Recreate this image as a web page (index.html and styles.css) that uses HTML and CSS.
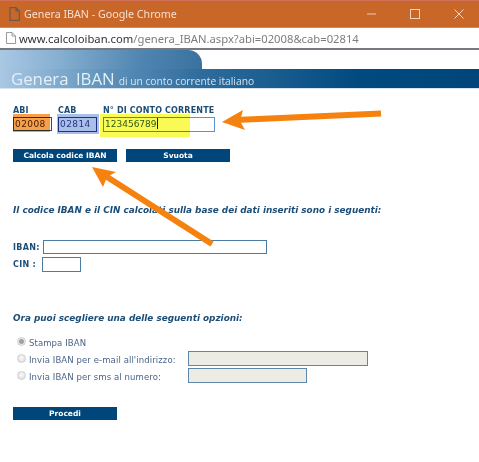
FILE: index.html
```html
<!DOCTYPE html>
<html lang="it">
<head>
<meta charset="utf-8">
<title>Genera IBAN</title>
<link rel="stylesheet" href="styles.css">
</head>
<body>
<header class="titlebar">
  <svg class="page-icon" width="11" height="14" viewBox="0 0 11 14"><path d="M1 .7h6l3.3 3.3v9.3H1z M7 .7V4h3.300" fill="none" stroke="#6b5a50" stroke-width="1.2"/></svg>
  <span class="title">Genera IBAN - Google Chrome</span>
  <div class="win-controls">
    <svg width="10" height="10" viewBox="0 0 10 10"><path d="M1 5h9" stroke="#f0c9ae" stroke-width="1"/></svg>
    <svg width="10" height="10" viewBox="0 0 10 10"><rect x=".5" y=".5" width="9" height="9" fill="none" stroke="#f0d3bf" stroke-width="1"/></svg>
    <svg width="10" height="10" viewBox="0 0 10 10"><path d="M.5.5l9 9M9.500.5l-9 9" stroke="#f6dccb" stroke-width="1"/></svg>
  </div>
</header>
<div class="urlbar">
  <svg class="url-icon" width="10" height="12" viewBox="0 0 10 12"><path d="M.5.5h5.500l3.500 3.500v7.500h-9z M6 .5V4h3.500" fill="#fff" stroke="#9a9a9a" stroke-width="1"/></svg>
  <span class="url"><span class="host">www.calcoloiban.com</span>/genera_IBAN.aspx?abi=02008&amp;cab=02814</span>
</div>
<div class="banner">
  <div class="banner-tab"></div>
  <div class="banner-strip">
    <span class="banner-title">Genera IBAN</span>
    <span class="banner-sub">di un conto corrente italiano</span>
  </div>
</div>
<main class="content">
  <div class="fields">
    <label class="field">
      <span class="field-label">ABI</span>
      <span class="box box-abi">02008</span>
    </label>
    <label class="field">
      <span class="field-label">CAB</span>
      <span class="box box-cab">02814</span>
    </label>
    <label class="field">
      <span class="field-label">N° DI CONTO CORRENTE</span>
      <span class="box box-conto">123456789<i class="caret"></i></span>
    </label>
    <div class="mark mark-abi"></div>
    <div class="mark mark-cab"></div>
    <div class="mark mark-conto"></div>
  </div>
  <div class="actions">
    <span class="btn">Calcola codice IBAN</span>
    <span class="btn">Svuota</span>
  </div>
  <h2 class="heading heading-first">Il codice IBAN e il CIN calcolati sulla base dei dati inseriti sono i seguenti:</h2>
  <div class="result-row row-iban">
    <span class="result-label">IBAN:</span>
    <span class="box result-iban"></span>
  </div>
  <div class="result-row row-cin">
    <span class="result-label">CIN :</span>
    <span class="box result-cin"></span>
  </div>
  <h2 class="heading heading-second">Ora puoi scegliere una delle seguenti opzioni:</h2>
  <div class="options">
    <span class="radio radio-on"></span><span class="option-text">Stampa IBAN</span><span></span>
    <span class="radio"></span><span class="option-text">Invia IBAN per e-mail all'indirizzo:</span><span class="box disabled disabled-mail"></span>
    <span class="radio"></span><span class="option-text">Invia IBAN per sms al numero:</span><span class="box disabled disabled-sms"></span>
  </div>
  <span class="btn btn-go">Procedi</span>
</main>
<svg class="arrows" width="479" height="462" viewBox="0 0 479 462">
  <path d="M381 113.500L236 120" stroke="#f5820f" stroke-width="6" fill="none"/>
  <path d="M222 122L243 110L240 121L245 130Z" fill="#f5820f"/>
  <path d="M212 244L104 175" stroke="#f5820f" stroke-width="6" fill="none"/>
  <path d="M92 167L116 172L107 177L103 187Z" fill="#f5820f"/>
</svg>
</body>
</html>
```
FILE: styles.css
```css
* { box-sizing: border-box; }
html, body { margin: 0; padding: 0; background: #fff; }
body { width: 479px; height: 462px; overflow: hidden; position: relative; font-family: "DejaVu Sans", Verdana, sans-serif; }

.titlebar { height: 28px; background: #c96729; border-top: 1px solid #d0705a; border-bottom: 1px solid #d58a5c; display: flex; align-items: center; padding-left: 9px; }
.page-icon { margin-right: 4px; flex: none; }
.title { font-family: "Noto Sans", "Open Sans", sans-serif; font-size: 10.700px; color: #f4dfd0; white-space: nowrap; }
.win-controls { margin-left: auto; display: flex; gap: 34px; padding-right: 15px; }

.urlbar { height: 20px; background: #fff; display: flex; align-items: center; padding-left: 6px; }
.url-icon { margin-right: 3px; flex: none; }
.url { font-family: "Noto Sans", "Open Sans", sans-serif; font-size: 11.240px; color: #7d7d7d; white-space: nowrap; }
.host { color: #2e3238; }

.banner { height: 41px; border-top: 2px solid #767a80; background: #fff; border-bottom: 1px solid #d6e4ef; }
.banner-tab { width: 202px; height: 19px; background: linear-gradient(90deg, #a9c8e4 0%, #85aed0 30%, #4f85b0 70%, #3a729f 100%); border-top-right-radius: 14px; }
.banner-strip { height: 19px; background: linear-gradient(90deg, #a9c8e4 0%, #5f93bb 22%, #2f6c9c 42%, #004a80 75%, #00467a 100%); display: flex; align-items: baseline; padding-left: 11px; line-height: 20px; white-space: nowrap; }
.banner-title { font-family: "Open Sans", "Noto Sans", sans-serif; font-size: 16.800px; color: #e3f0f8; margin-right: 4px; word-spacing: 3px; }
.banner-sub { font-family: "Open Sans", "Noto Sans", sans-serif; font-size: 10.250px; color: #d3e4f0; }

.content { padding: 17px 0 0 13px; }

.fields { display: flex; align-items: flex-start; position: relative; }
.field { display: flex; flex-direction: column; margin-right: 6px; }
.field-label { font-size: 8px; font-weight: 700; color: #1c4d77; line-height: 10px; height: 11px; white-space: nowrap; letter-spacing: .15px; }
.box { display: block; background: #fff; border: 1px solid #4d7ca3; font-size: 9px; line-height: 12px; padding-left: 1px; color: #3a5a70; }
.box-abi { width: 39px; height: 14px; border-color: #2f4b7c; color: #4a2a10; letter-spacing: .4px; }
.box-cab { width: 39px; height: 15px; border-color: #2f3f8a; color: #3d4a8a; letter-spacing: .4px; }
.box-conto { width: 112px; height: 15px; border-color: #5b93d8; color: #2f5d40; }
.caret { display: inline-block; width: 1px; height: 11px; background: #222; vertical-align: -2px; }

.mark { position: absolute; top: 8px; mix-blend-mode: multiply; pointer-events: none; }
.mark-abi { left: 0; width: 37px; height: 18px; background: #f7a04a; }
.mark-cab { left: 44px; width: 42px; height: 20px; background: #a9bfea; }
.mark-conto { left: 87px; width: 90px; height: 23px; background: #fafa55; }

.actions { display: flex; gap: 9px; margin-top: 17px; }
.btn { display: block; width: 104px; height: 13px; background: #00467a; color: #fff; font-family: "DejaVu Sans", sans-serif; font-size: 7.500px; font-weight: 700; line-height: 13px; text-align: center; white-space: nowrap; }

.heading { margin: 0; font-size: 8.870px; font-weight: 700; font-style: italic; line-height: 12px; color: #1c4d77; white-space: nowrap; }
.heading-first { margin-top: 42px; }
.heading-second { margin-top: 40px; }

.result-row { display: flex; align-items: center; }
.result-label { font-size: 8px; font-weight: 700; color: #1c4d77; width: 29px; flex: none; white-space: nowrap; letter-spacing: .3px; }
.row-iban { margin-top: 24px; }
.row-cin { margin-top: 3px; }
.result-iban { width: 224px; height: 14px; margin-left: 1px; }
.result-cin { width: 39px; height: 15px; }

.options { display: grid; grid-template-columns: 16px 159px auto; grid-auto-rows: 17px; align-items: center; margin-top: 10px; }
.radio { width: 9px; height: 9px; margin: 0 0 2px 4px; border-radius: 50%; background: radial-gradient(circle at 50% 40%, #fafafa, #d8d8d8); border: 1px solid #d0d0d0; }
.radio-on { background: radial-gradient(circle, #a0a0a0 0 2px, #ececec 3px); }
.option-text { font-size: 8.500px; color: #4a6488; white-space: nowrap; letter-spacing: .1px; }
.disabled { background: #ecebe4; border-color: #5d88a9; margin-bottom: 2px; }
.disabled-mail { width: 180px; height: 15px; }
.disabled-sms { width: 119px; height: 15px; }

.btn-go { margin-top: 22px; }

.arrows { position: absolute; left: 0; top: 0; pointer-events: none; }
```
